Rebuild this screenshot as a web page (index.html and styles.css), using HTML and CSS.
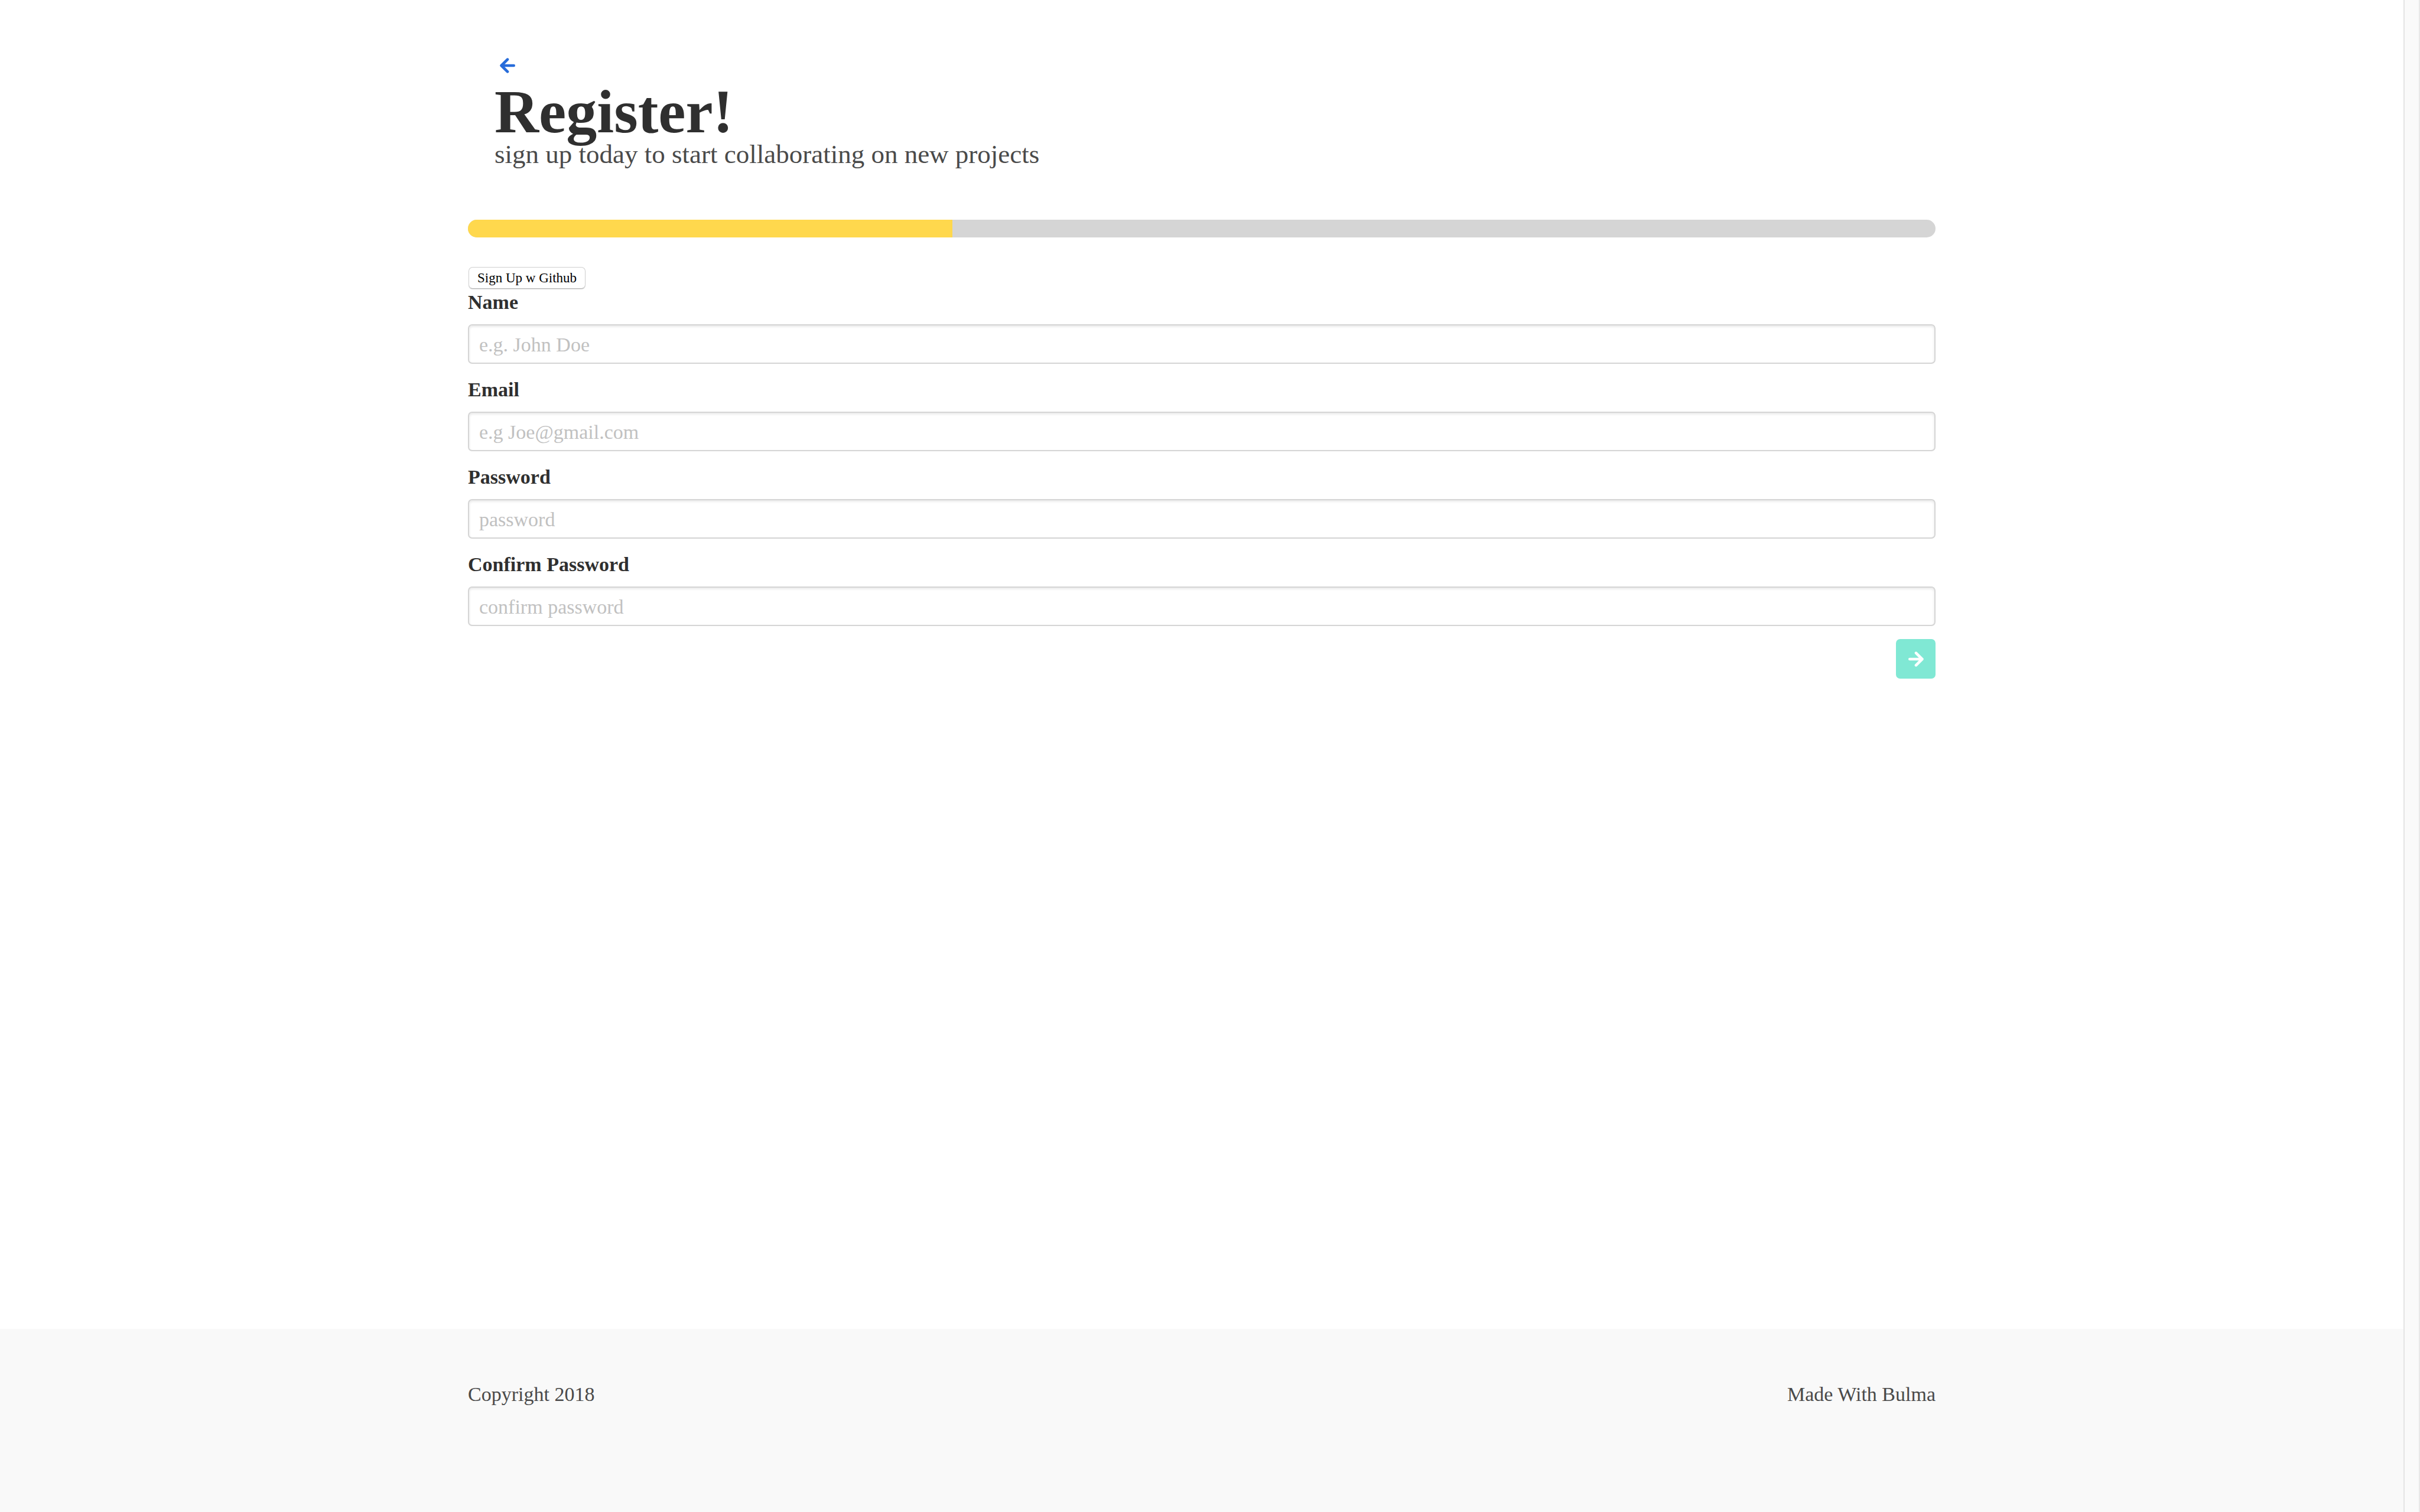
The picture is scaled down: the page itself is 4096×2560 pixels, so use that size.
FILE: index.html
```html
<!DOCTYPE html>
<html lang="en">
<head>
  <meta charset="utf-8">
  <title>Register</title>
  <link rel="stylesheet" href="styles.css">
</head>
<body>
  <div class="page">
    <main class="container">
      <header class="hero">
        <a class="back" href="#" aria-label="Back">
          <svg class="arrow" viewBox="0 0 28 28" aria-hidden="true"><path d="M14 2.800L2.800 14L14 25.200M3.500 14H25.500"/></svg>
        </a>
        <h1 class="title">Register!</h1>
        <p class="subtitle">sign up today to start collaborating on new projects</p>
      </header>
      <progress class="progress" value="33" max="100" aria-label="Registration progress"></progress>
      <form class="form">
        <button class="github" type="button">Sign Up w Github</button>
        <div class="field">
          <label class="label" for="name">Name</label>
          <input class="input" id="name" type="text" placeholder="e.g. John Doe">
        </div>
        <div class="field">
          <label class="label" for="email">Email</label>
          <input class="input" id="email" type="email" placeholder="e.g Joe@gmail.com">
        </div>
        <div class="field">
          <label class="label" for="password">Password</label>
          <input class="input" id="password" type="password" placeholder="password">
        </div>
        <div class="field">
          <label class="label" for="confirm">Confirm Password</label>
          <input class="input" id="confirm" type="password" placeholder="confirm password">
        </div>
        <button class="next" type="button" aria-label="Next">
          <svg class="arrow" viewBox="0 0 28 28" aria-hidden="true"><path d="M14 2.800L25.200 14L14 25.200M24.500 14H2.500"/></svg>
        </button>
      </form>
    </main>
    <footer class="footer">
      <div class="container footer-row">
        <p>Copyright 2018</p>
        <p>Made With Bulma</p>
      </div>
    </footer>
  </div>
  <div class="scroll-track"></div>
</body>
</html>
```
FILE: styles.css
```css
* {
  box-sizing: border-box;
  margin: 0;
}

body {
  display: flex;
  min-height: 100vh;
  background: #fff;
  color: #4a4a4a;
  font-family: "Liberation Serif", serif;
  font-size: 34px;
  line-height: 44px;
}

button,
input {
  font-family: inherit;
}

.page {
  flex: 1;
  display: flex;
  flex-direction: column;
}

.scroll-track {
  width: 28px;
  background: #fafafa;
  border-left: 2px solid #e4e4e4;
  border-right: 2px solid #e8e8e8;
}

.container {
  width: 100%;
  max-width: 2484px;
  margin: 0 auto;
}

.hero {
  padding: 89px 45px 90px;
}

.back {
  display: flex;
  align-items: center;
  justify-content: center;
  width: 44px;
  height: 44px;
  color: #276cda;
}

.arrow {
  width: 26px;
  height: 26px;
  fill: none;
  stroke: currentColor;
  stroke-width: 5;
  stroke-linecap: round;
  stroke-linejoin: round;
}

.title {
  padding-top: 5px;
  color: #2f2f2f;
  font-size: 104px;
  line-height: 102px;
}

.subtitle {
  font-size: 45px;
  line-height: 42px;
}

.progress {
  appearance: none;
  display: block;
  width: 100%;
  height: 30px;
  border: 0;
  border-radius: 15px;
  overflow: hidden;
  background: #d5d5d5;
}

.progress::-webkit-progress-bar {
  background: #d5d5d5;
}

.progress::-webkit-progress-value {
  background: #ffd84d;
}

.form {
  display: flex;
  flex-direction: column;
  gap: 22px;
  padding-top: 50px;
}

.github {
  align-self: flex-start;
  height: 37px;
  margin: 0 1px -21px;
  padding: 0 14px;
  border: 1px solid #d0d0d0;
  border-bottom-color: #b4b4b4;
  border-radius: 7px;
  background: #fff;
  box-shadow: 0 1px 1px #ddd;
  color: #000;
  font-size: 23px;
}

.field {
  display: flex;
  flex-direction: column;
  gap: 15px;
}

.label {
  color: #2f2f2f;
  font-weight: 700;
}

.input {
  width: 100%;
  height: 67px;
  padding: 2px 17px 0;
  border: 2px solid #d5d5d5;
  border-radius: 7px;
  background: #fff;
  box-shadow: inset 0 2px 4px rgba(10, 10, 10, 0.1);
  color: #2f2f2f;
  font-size: 34px;
}

.input::placeholder {
  color: #c1c1c1;
}

.next {
  align-self: flex-end;
  display: flex;
  align-items: center;
  justify-content: center;
  width: 67px;
  height: 67px;
  padding: 0;
  border: 0;
  border-radius: 7px;
  background: #80e8d4;
  color: #fff;
}

.footer {
  margin-top: auto;
  padding: 89px 0 177px;
  background: #f9f9f9;
}

.footer-row {
  display: flex;
  justify-content: space-between;
}
```
